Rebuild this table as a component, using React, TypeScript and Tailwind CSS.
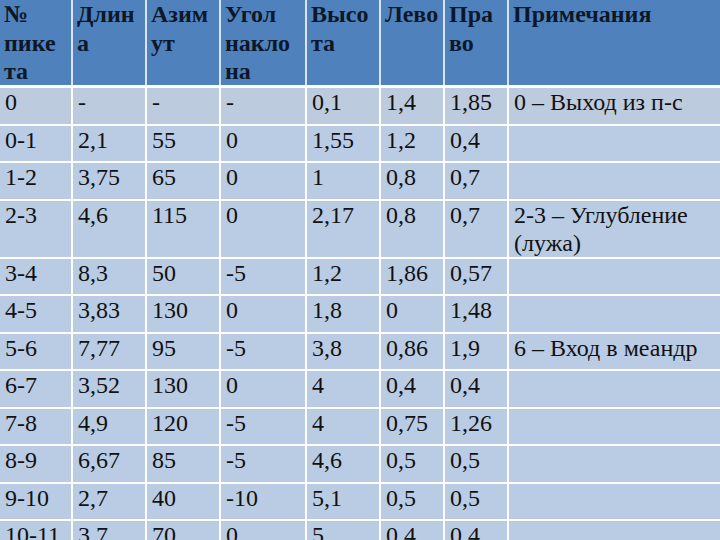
const header: string[][] = [
  ['№', 'пике', 'та'],
  ['Длин', 'а'],
  ['Азим', 'ут'],
  ['Угол', 'накло', 'на'],
  ['Высо', 'та'],
  ['Лево'],
  ['Пра', 'во'],
  ['Примечания'],
];

const rows: string[][] = [
  ['0', '-', '-', '-', '0,1', '1,4', '1,85', '0 – Выход из п-с'],
  ['0-1', '2,1', '55', '0', '1,55', '1,2', '0,4', ''],
  ['1-2', '3,75', '65', '0', '1', '0,8', '0,7', ''],
  ['2-3', '4,6', '115', '0', '2,17', '0,8', '0,7', '2-3 – Углубление\n(лужа)'],
  ['3-4', '8,3', '50', '-5', '1,2', '1,86', '0,57', ''],
  ['4-5', '3,83', '130', '0', '1,8', '0', '1,48', ''],
  ['5-6', '7,77', '95', '-5', '3,8', '0,86', '1,9', '6 – Вход в меандр'],
  ['6-7', '3,52', '130', '0', '4', '0,4', '0,4', ''],
  ['7-8', '4,9', '120', '-5', '4', '0,75', '1,26', ''],
  ['8-9', '6,67', '85', '-5', '4,6', '0,5', '0,5', ''],
  ['9-10', '2,7', '40', '-10', '5,1', '0,5', '0,5', ''],
  ['10-11', '3,7', '70', '0', '5', '0,4', '0,4', ''],
];

const cols = 'grid-cols-[71px_72px_72px_84px_72px_62px_62px_1fr]';

export default function App() {
  return (
    <div className="h-[540px] w-[720px] overflow-hidden bg-white font-['Liberation_Serif',serif]">
      <div className={`grid ${cols} gap-x-[2px] bg-[#dbe5f1]`}>
        {header.map((lines, i) => (
          <div key={i} className="h-[85px] bg-[#4f81bd] pl-[4px] text-[24px] font-bold leading-[28.5px] text-[#0c1828]">
            {lines.map((l, j) => (
              <div key={j}>{l}</div>
            ))}
          </div>
        ))}
      </div>
      <div className={`mt-[3px] grid ${cols} gap-[2px] bg-white`}>
        {rows.map((row, r) =>
          row.map((cell, c) => (
            <div
              key={`${r}-${c}`}
              className={`min-h-[35.5px] pl-[5px] text-[24px] leading-[28px] text-[#111] whitespace-pre-line ${
                r === 0 ? 'bg-[#bdcbdf]' : 'bg-[#b9cce4]'
              }`}
            >
              {cell}
            </div>
          ))
        )}
      </div>
    </div>
  );
}
